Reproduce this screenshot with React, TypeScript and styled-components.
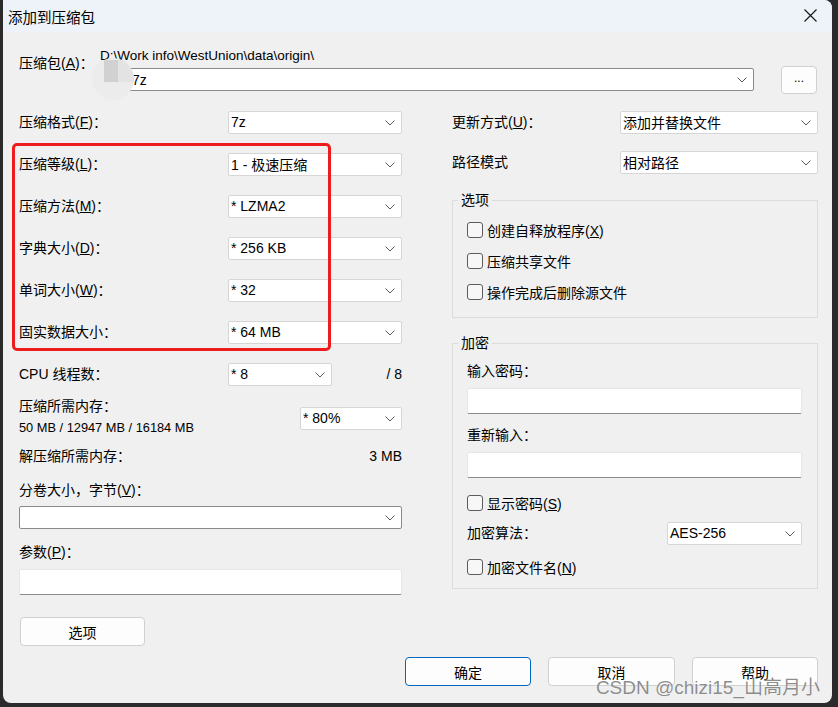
import styled, { createGlobalStyle } from "styled-components";

const GlobalStyle = createGlobalStyle`
  html, body {
    margin: 0;
    padding: 0;
    background: #2b2b2b;
  }
  * {
    box-sizing: border-box;
  }
  body {
    font-family: "Liberation Sans", "Noto Sans CJK SC", sans-serif;
    font-size: 14px;
    color: #000;
  }
`;

const Screen = styled.div`
  width: 838px;
  height: 707px;
  padding-left: 3px;
  background: #2b2b2b;
  overflow: hidden;
`;

const Window = styled.div`
  position: relative;
  width: 829px;
  height: 703px;
  background: #f0f0f0;
  border-radius: 0 8px 8px 8px;
  overflow: hidden;
  display: flex;
  flex-direction: column;
`;

const TitleBar = styled.div`
  height: 32px;
  flex: 0 0 32px;
  background: #eef3f9;
  display: flex;
  align-items: center;
  justify-content: space-between;
  padding: 0 12px 0 5px;
  font-size: 14.5px;
`;

const CloseButton = styled.div`
  width: 20px;
  height: 20px;
  display: flex;
  align-items: center;
  justify-content: center;
  margin-top: -2px;
`;

const Body = styled.div`
  padding: 14px 14px 0 16px;
`;

const ArchiveGrid = styled.div`
  display: grid;
  grid-template-columns: 81px 654px 1fr;
  grid-template-rows: 20px 23px;
  row-gap: 2px;
`;

const ArchiveLabel = styled.div`
  grid-row: 1 / 3;
  margin-top: 7px;
  line-height: 20px;
  white-space: nowrap;
`;

const PathText = styled.div`
  line-height: 20px;
  font-size: 13.5px;
  white-space: nowrap;
`;

const Columns = styled.div`
  display: flex;
  gap: 50px;
  margin-top: 10px;
`;

const Column = styled.div<{ $width: number }>`
  width: ${({ $width }) => $width}px;
  display: flex;
  flex-direction: column;
`;

const FieldRow = styled.div<{ $height?: number }>`
  height: ${({ $height }) => $height ?? 42}px;
  display: flex;
  align-items: center;
`;

const Label = styled.div`
  flex: 1;
  line-height: 20px;
  white-space: nowrap;
`;

const Suffix = styled.div`
  flex: 0 0 70px;
  text-align: right;
  white-space: nowrap;
`;

const SelectBox = styled.div<{ $width?: number; $dark?: boolean }>`
  position: relative;
  width: ${({ $width }) => ($width ? `${$width}px` : "100%")};
  flex: 0 0 auto;
  height: 23px;
  background: #fff;
  border: 1px solid ${({ $dark }) => ($dark ? "#8a8a8a" : "#d6d6d6")};
  border-radius: 2px;
  display: flex;
  align-items: center;
  padding: 0 24px 0 2px;
  white-space: nowrap;
`;

const ChevronWrap = styled.span`
  position: absolute;
  right: 6px;
  top: 8px;
  display: flex;
`;

const TextField = styled.div<{ $width?: number }>`
  width: ${({ $width }) => ($width ? `${$width}px` : "100%")};
  height: 26px;
  background: #fff;
  border: 1px solid #e6e6e6;
  border-bottom: 1px solid #8a8a8a;
  border-radius: 2px;
`;

const MemoryBlock = styled.div`
  height: 46px;
  display: flex;
  align-items: center;
`;

const MemoryText = styled.div`
  flex: 1;
  padding-bottom: 2px;
  line-height: 21px;
  white-space: nowrap;
`;

const MemoryNumbers = styled.div`
  font-size: 12.8px;
`;

const StackLabel = styled.div<{ $top: number }>`
  margin-top: ${({ $top }) => $top}px;
  line-height: 20px;
  white-space: nowrap;
`;

const Spaced = styled.div<{ $top: number; $left?: number }>`
  margin-top: ${({ $top }) => $top}px;
  margin-left: ${({ $left }) => $left ?? 0}px;
`;

const Button = styled.button<{ $width: number; $primary?: boolean }>`
  width: ${({ $width }) => $width}px;
  height: 29px;
  background: #fdfdfd;
  border: 1px solid ${({ $primary }) => ($primary ? "#0067c0" : "#d0d0d0")};
  border-radius: 4px;
  font-family: "Liberation Sans", "Noto Sans CJK SC", sans-serif;
  font-size: 14px;
  color: #000;
  padding: 0;
`;

const SmallButton = styled(Button)`
  grid-row: 1 / 3;
  grid-column: 3;
  justify-self: end;
  align-self: end;
  height: 28px;
  margin-right: 1px;
  margin-bottom: -3px;
  font-size: 12px;
  line-height: 1;
  padding-bottom: 4px;
`;

const Group = styled.fieldset<{ $top: number; $pad: string }>`
  margin: ${({ $top }) => $top}px 0 0 0;
  padding: ${({ $pad }) => $pad};
  border: 1px solid #dcdcdc;
  min-width: 0;
`;

const Legend = styled.legend`
  margin-left: -9px;
  padding: 0 3px;
  line-height: 20px;
`;

const CheckRow = styled.label<{ $height?: number }>`
  height: ${({ $height }) => $height ?? 31}px;
  display: flex;
  align-items: center;
  gap: 4px;
  white-space: nowrap;
`;

const CheckBox = styled.span`
  width: 16px;
  height: 16px;
  flex: 0 0 16px;
  border: 1px solid #5c5c5c;
  border-radius: 3px;
  background: #f7f7f7;
`;

const Footer = styled.div`
  display: flex;
  justify-content: flex-end;
  gap: 17px;
  margin-top: 11px;
`;

const Highlight = styled.div`
  position: absolute;
  left: 9px;
  top: 143px;
  width: 319px;
  height: 208px;
  border: 3px solid #ee1d1d;
  border-radius: 5px;
  pointer-events: none;
`;

const AvatarBlur = styled.div`
  position: absolute;
  left: 89px;
  top: 58px;
  width: 42px;
  height: 42px;
  border-radius: 50%;
  background: #ececec;
  overflow: hidden;
  &::before {
    content: "";
    position: absolute;
    left: 12px;
    top: 2px;
    width: 14px;
    height: 22px;
    background: #d1d1d1;
  }
  &::after {
    content: "";
    position: absolute;
    left: 26px;
    top: 2px;
    width: 16px;
    height: 22px;
    background: #e3e3e3;
  }
`;

const Watermark = styled.div`
  position: absolute;
  right: 12px;
  top: 676px;
  font-family: "Liberation Sans", "Noto Sans CJK SC", sans-serif;
  font-size: 19px;
  line-height: 24px;
  color: rgba(120, 120, 120, 0.85);
  text-shadow: 0 0 1px rgba(255, 255, 255, 0.9);
  white-space: nowrap;
  pointer-events: none;
`;

const Chevron = () => (
  <ChevronWrap>
    <svg width="10" height="6" viewBox="0 0 10 6">
      <polyline points="0.5,0.5 5,5 9.5,0.5" fill="none" stroke="#5a5a5a" strokeWidth="1" />
    </svg>
  </ChevronWrap>
);

const Select = ({ value, width, dark, indent }: { value?: string; width?: number; dark?: boolean; indent?: number }) => (
  <SelectBox $width={width} $dark={dark} style={indent ? { paddingLeft: indent } : undefined}>
    {value}
    <Chevron />
  </SelectBox>
);

const Check = ({ children, height }: { children: React.ReactNode; height?: number }) => (
  <CheckRow $height={height}>
    <CheckBox />
    <span>{children}</span>
  </CheckRow>
);

const leftRows = [
  { label: "压缩等级", key: "L", value: "1 - 极速压缩" },
  { label: "压缩方法", key: "M", value: "*  LZMA2" },
  { label: "字典大小", key: "D", value: "*  256 KB" },
  { label: "单词大小", key: "W", value: "*  32" },
  { label: "固实数据大小", key: "", value: "*  64 MB" },
];

export default function App() {
  return (
    <Screen>
      <GlobalStyle />
      <Window>
        <TitleBar>
          <span>添加到压缩包</span>
          <CloseButton>
            <svg width="13" height="13" viewBox="0 0 13 13">
              <path d="M0.5 0.5 L12.5 12.5 M12.5 0.5 L0.5 12.5" stroke="#1a1a1a" strokeWidth="1.2" />
            </svg>
          </CloseButton>
        </TitleBar>
        <Body>
          <ArchiveGrid>
            <ArchiveLabel>
              压缩包(<u>A</u>)：
            </ArchiveLabel>
            <PathText>D:\Work info\WestUnion\data\origin\</PathText>
            <SmallButton $width={36}>...</SmallButton>
            <div style={{ gridColumn: 2 }}>
              <Select value="7z" dark indent={31} />
            </div>
          </ArchiveGrid>

          <Columns>
            <Column $width={383}>
              <FieldRow>
                <Label>
                  压缩格式(<u>F</u>)：
                </Label>
                <Select value="7z" width={174} />
              </FieldRow>
              {leftRows.map((row) => (
                <FieldRow key={row.label}>
                  <Label>
                    {row.label}
                    {row.key && (
                      <>
                        (<u>{row.key}</u>)
                      </>
                    )}
                    ：
                  </Label>
                  <Select value={row.value} width={174} />
                </FieldRow>
              ))}
              <FieldRow>
                <Label>CPU 线程数：</Label>
                <Select value="*  8" width={104} />
                <Suffix>/ 8</Suffix>
              </FieldRow>
              <MemoryBlock>
                <MemoryText>
                  <div>压缩所需内存：</div>
                  <MemoryNumbers>50 MB / 12947 MB / 16184 MB</MemoryNumbers>
                </MemoryText>
                <Select value="* 80%" width={102} />
              </MemoryBlock>
              <FieldRow $height={30}>
                <Label>解压缩所需内存：</Label>
                <span>3 MB</span>
              </FieldRow>
              <StackLabel $top={9}>
                分卷大小，字节(<u>V</u>)：
              </StackLabel>
              <Spaced $top={6}>
                <Select dark />
              </Spaced>
              <StackLabel $top={13}>
                参数(<u>P</u>)：
              </StackLabel>
              <Spaced $top={7}>
                <TextField />
              </Spaced>
              <Spaced $top={22} $left={1}>
                <Button $width={125}>选项</Button>
              </Spaced>
            </Column>

            <Column $width={366}>
              <FieldRow>
                <Label>
                  更新方式(<u>U</u>)：
                </Label>
                <Select value="添加并替换文件" width={198} />
              </FieldRow>
              <FieldRow $height={38}>
                <Label>路径模式</Label>
                <Select value="相对路径" width={198} />
              </FieldRow>
              <Group $top={9} $pad="4px 15px 10px 14px">
                <Legend>选项</Legend>
                <Check>
                  创建自释放程序(<u>X</u>)
                </Check>
                <Check>压缩共享文件</Check>
                <Check>操作完成后删除源文件</Check>
              </Group>
              <Group $top={15} $pad="8px 15px 6px 14px">
                <Legend>加密</Legend>
                <StackLabel $top={0}>输入密码：</StackLabel>
                <Spaced $top={7}>
                  <TextField />
                </Spaced>
                <StackLabel $top={11}>重新输入：</StackLabel>
                <Spaced $top={7}>
                  <TextField />
                </Spaced>
                <Spaced $top={10}>
                  <Check height={30}>
                    显示密码(<u>S</u>)
                  </Check>
                </Spaced>
                <FieldRow $height={30}>
                  <Label>加密算法：</Label>
                  <Select value="AES-256" width={135} />
                </FieldRow>
                <Spaced $top={4}>
                  <Check height={30}>
                    加密文件名(<u>N</u>)
                  </Check>
                </Spaced>
              </Group>
            </Column>
          </Columns>

          <Footer>
            <Button $width={126} $primary>
              确定
            </Button>
            <Button $width={127}>取消</Button>
            <Button $width={126}>帮助</Button>
          </Footer>
        </Body>
        <AvatarBlur />
        <Highlight />
        <Watermark>CSDN @chizi15_山高月小</Watermark>
      </Window>
    </Screen>
  );
}
